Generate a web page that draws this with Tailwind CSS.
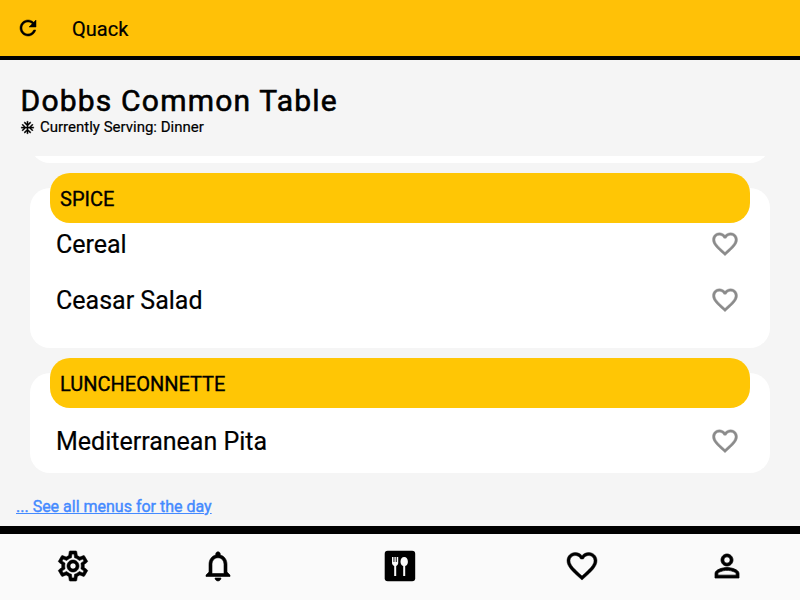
<!DOCTYPE html>
<html lang="en">
<head>
<meta charset="utf-8">
<title>Quack</title>
<script src="https://cdn.jsdelivr.net/npm/@tailwindcss/browser@4"></script>
</head>
<body class="w-[800px] h-[600px] overflow-hidden flex flex-col bg-[#f5f5f5] text-black font-['Roboto',sans-serif] [-webkit-text-stroke:0.2px]">
<svg class="hidden">
  <symbol id="heart" viewBox="0 0 24 24"><path d="M16.5 3c-1.74 0-3.41.81-4.5 2.09C10.91 3.81 9.24 3 7.5 3 4.42 3 2 5.42 2 8.5c0 3.78 3.4 6.86 8.55 11.54L12 21.35l1.45-1.32C18.6 15.36 22 12.28 22 8.5 22 5.42 19.58 3 16.5 3zm-4.4 15.55l-.1.1-.1-.1C7.14 14.24 4 11.39 4 8.5 4 6.5 5.5 5 7.5 5c1.54 0 3.04.99 3.57 2.36h1.87C13.46 5.99 14.96 5 16.5 5c2 0 3.5 1.5 3.5 3.5 0 2.89-3.14 5.74-7.9 10.05z"/></symbol>
</svg>
<header class="h-15 shrink-0 bg-[#ffc107] border-b-4 border-black flex items-center pl-4 gap-8">
  <svg class="size-6 stroke-black stroke-[0.5]" viewBox="0 0 24 24"><path d="M17.65 6.35C16.2 4.9 14.21 4 12 4c-4.42 0-7.99 3.58-7.99 8s3.57 8 7.99 8c3.73 0 6.84-2.55 7.73-6h-2.08c-.82 2.33-3.04 4-5.65 4-3.31 0-6-2.69-6-6s2.69-6 6-6c1.66 0 3.14.69 4.22 1.78L13 11h7V4l-2.35 2.35z"/></svg>
  <div class="text-[20px] leading-6 pt-0.5">Quack</div>
</header>
<section class="h-24 shrink-0 pl-5 pt-[22px]">
  <h1 class="text-[30px] leading-[36px] tracking-[1.2px] pl-[0.5px] pt-px -mb-px [-webkit-text-stroke:0.6px]">Dobbs Common Table</h1>
  <div class="flex items-center gap-[5px] text-[15px] leading-[18px]">
    <svg class="size-[15px] stroke-black stroke-[0.5]" viewBox="0 0 24 24"><path d="M22 11h-4.17l3.24-3.24-1.41-1.42L15 11h-2V9l4.66-4.66-1.42-1.41L13 6.17V2h-2v4.17L7.76 2.93 6.34 4.34 11 9v2H9L4.34 6.34 2.93 7.76 6.17 11H2v2h4.17l-3.24 3.24 1.41 1.42L9 13h2v2l-4.66 4.66 1.42 1.41L11 17.83V22h2v-4.17l3.24 3.24 1.42-1.41L13 15v-2h2l4.66 4.66 1.41-1.42L17.83 13H22z"/></svg>
    <span>Currently Serving: Dinner</span>
  </div>
</section>
<main class="h-[332px] shrink-0 overflow-hidden px-[30px] flex flex-col justify-end">
  <div class="h-20 shrink-0 rounded-[20px] bg-white"></div>
  <section class="pt-[25px] shrink-0">
    <div class="h-40 flow-root rounded-[20px] bg-white px-5">
      <h2 class="-mt-[15px] h-[50px] rounded-[20px] bg-[#ffc605] pl-2.5 pt-0.5 flex items-center text-[20px] [-webkit-text-stroke:0.35px]">SPICE</h2>
      <div class="-mt-[7px] pl-1.5 pr-2.5">
        <div class="h-14 flex items-center justify-between text-[25px]"><span class="pt-0.5">Cereal</span><svg class="size-[30px] fill-[#8b8b8b] stroke-[#8b8b8b] stroke-[0.3]"><use href="#heart"/></svg></div>
        <div class="h-14 flex items-center justify-between text-[25px]"><span class="pt-0.5">Ceasar Salad</span><svg class="size-[30px] fill-[#8b8b8b] stroke-[#8b8b8b] stroke-[0.3]"><use href="#heart"/></svg></div>
      </div>
    </div>
  </section>
  <section class="pt-[25px] shrink-0">
    <div class="h-[100px] flow-root rounded-[20px] bg-white px-5">
      <h2 class="-mt-[15px] h-[50px] rounded-[20px] bg-[#ffc605] pl-2.5 pt-0.5 flex items-center text-[20px] [-webkit-text-stroke:0.35px]">LUNCHEONNETTE</h2>
      <div class="mt-[5px] pl-1.5 pr-2.5">
        <div class="h-14 flex items-center justify-between text-[25px]"><span class="pt-0.5">Mediterranean Pita</span><svg class="size-[30px] fill-[#8b8b8b] stroke-[#8b8b8b] stroke-[0.3]"><use href="#heart"/></svg></div>
      </div>
    </div>
  </section>
  <div class="h-[53px] -mb-[38px] shrink-0"></div>
</main>
<div class="h-[38px] shrink-0 pl-4 pt-2 text-[16px] leading-[22px]"><a class="underline text-[#448aff] [-webkit-text-stroke:0.4px]" href="#">... See all menus for the day</a></div>
<nav class="h-[74px] shrink-0 border-t-8 border-black bg-[#fafafa] grid grid-cols-[2fr_2fr_3fr_2fr_2fr] place-items-center pb-[2px]">
  <svg class="size-9 stroke-black stroke-[0.4]" viewBox="0 0 24 24"><path d="M19.43 12.98c.04-.32.07-.64.07-.98 0-.34-.03-.66-.07-.98l2.11-1.65c.19-.15.24-.42.12-.64l-2-3.46c-.09-.16-.26-.25-.44-.25-.06 0-.12.01-.17.03l-2.49 1c-.52-.4-1.08-.73-1.69-.98l-.38-2.65C14.46 2.18 14.25 2 14 2h-4c-.25 0-.46.18-.49.42l-.38 2.65c-.61.25-1.17.59-1.69.98l-2.49-1c-.06-.02-.12-.03-.18-.03-.17 0-.34.09-.43.25l-2 3.46c-.13.22-.07.49.12.64l2.11 1.65c-.04.32-.07.65-.07.98 0 .33.03.66.07.98l-2.11 1.65c-.19.15-.24.42-.12.64l2 3.46c.09.16.26.25.44.25.06 0 .12-.01.17-.03l2.49-1c.52.4 1.08.73 1.69.98l.38 2.65c.03.24.24.42.49.42h4c.25 0 .46-.18.49-.42l.38-2.65c.61-.25 1.17-.59 1.69-.98l2.49 1c.06.02.12.03.18.03.17 0 .34-.09.43-.25l2-3.46c.12-.22.07-.49-.12-.64l-2.11-1.65zm-1.98-1.71c.04.31.05.52.05.73 0 .21-.02.43-.05.73l-.14 1.13.89.7 1.08.84-.7 1.21-1.27-.51-1.04-.42-.9.68c-.43.32-.84.56-1.25.73l-1.06.43-.16 1.13-.2 1.35h-1.4l-.19-1.35-.16-1.13-1.06-.43c-.43-.18-.83-.41-1.23-.71l-.91-.7-1.06.43-1.27.51-.7-1.21 1.08-.84.89-.7-.14-1.13c-.03-.31-.05-.54-.05-.74s.02-.43.05-.73l.14-1.13-.89-.7-1.08-.84.7-1.21 1.27.51 1.04.42.9-.68c.43-.32.84-.56 1.25-.73l1.06-.43.16-1.13.2-1.35h1.39l.19 1.35.16 1.13 1.06.43c.43.18.83.41 1.23.71l.91.7 1.06-.43 1.27-.51.7 1.21-1.07.85-.89.7.14 1.13zM12 8c-2.21 0-4 1.79-4 4s1.79 4 4 4 4-1.79 4-4-1.79-4-4-4zm0 6c-1.1 0-2-.9-2-2s.9-2 2-2 2 .9 2 2-.9 2-2 2z"/></svg>
  <svg class="size-9 stroke-black stroke-[0.4]" viewBox="0 0 24 24"><path d="M12 22c1.1 0 2-.9 2-2h-4c0 1.1.9 2 2 2zm6-6v-5c0-3.07-1.63-5.64-4.5-6.32V4c0-.83-.67-1.5-1.5-1.5s-1.5.67-1.5 1.5v.68C7.64 5.36 6 7.92 6 11v5l-2 2v1h16v-1l-2-2zm-2 1H8v-6c0-2.48 1.51-4.5 4-4.5s4 2.02 4 4.5v6z"/></svg>
  <svg class="size-9" viewBox="0 0 36 36"><rect x="2.700" y="2.700" width="30.500" height="30.500" rx="3"/><path fill="#fafafa" d="M10 9h1.500v5h.9V9h1.400v5h.9V9h1.500v6c0 1.500-.9 2.500-2 2.900V28h-2V17.900c-1.200-.4-2.200-1.400-2.200-2.900z"/><path fill="#fafafa" d="M22.200 9c2.200 0 3.700 2.100 3.700 4.700 0 2-1 3.700-2.700 4.300v10h-2V18c-1.600-.6-2.700-2.300-2.700-4.300 0-2.600 1.500-4.700 3.700-4.700z"/></svg>
  <svg class="size-9 stroke-black stroke-[0.3]"><use href="#heart"/></svg>
  <svg class="size-9 stroke-black stroke-[0.5]" viewBox="0 0 24 24"><path d="M12 5.900c1.160 0 2.100.94 2.100 2.100s-.94 2.100-2.100 2.100S9.900 9.160 9.900 8s.94-2.100 2.100-2.100m0 9c2.970 0 6.100 1.460 6.100 2.100v1.100H5.900V17c0-.64 3.130-2.100 6.100-2.100M12 4C9.790 4 8 5.790 8 8s1.790 4 4 4 4-1.790 4-4-1.790-4-4-4zm0 9c-2.670 0-8 1.340-8 4v3h16v-3c0-2.660-5.330-4-8-4z"/></svg>
</nav>
</body>
</html>
